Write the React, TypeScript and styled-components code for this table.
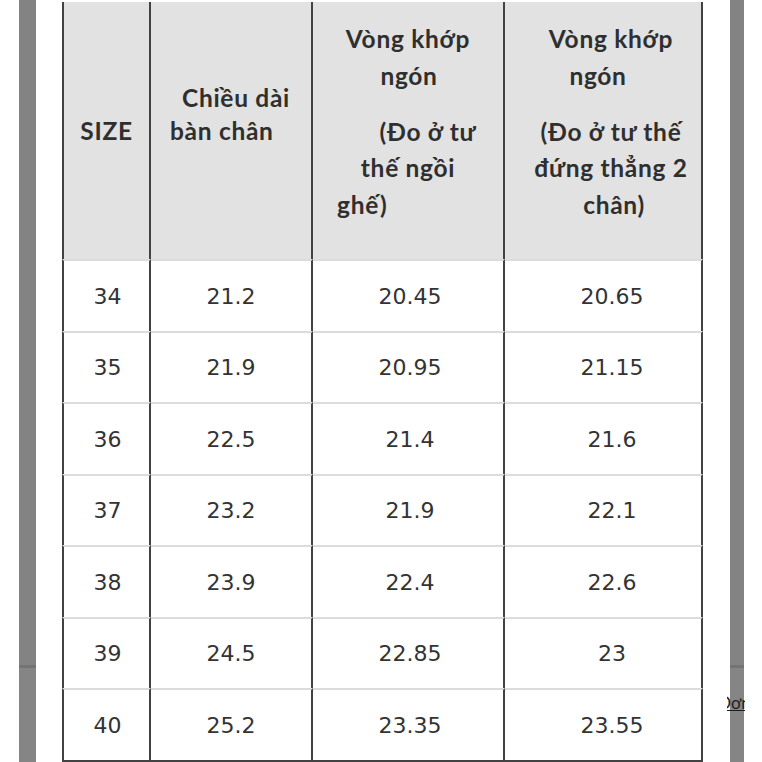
import React from "react";
import styled, { createGlobalStyle } from "styled-components";

const Global = createGlobalStyle`
  html, body { margin: 0; padding: 0; background: #ffffff; }
  body { font-family: "Lato", "Liberation Sans", sans-serif; }
`;

const Page = styled.div`
  position: relative;
  display: grid;
  grid-template-columns: 19px 17px 1fr 14px 18px;
  width: 762px;
  height: 762px;
  overflow: hidden;
  background: #ffffff;
`;

const Blank = styled.div`
  background: #ffffff;
`;

const SideBar = styled.div`
  background: linear-gradient(
    to bottom,
    #838383 0,
    #838383 665px,
    #747474 665px,
    #747474 668px,
    #858585 668px
  );
`;

const Center = styled.div`
  padding: 2px 27px 0 26px;
`;

const Grid = styled.div`
  display: grid;
  grid-template-columns: 89px 162px 192px 198px;
  grid-template-rows: 257px repeat(7, 71.5px);
  border-bottom: 2px solid #424242;
`;

const HeadCell = styled.div<{ $first?: boolean; $padBottom: number; $padLeft: number; $lh: number }>`
  box-sizing: border-box;
  display: flex;
  flex-direction: column;
  justify-content: center;
  background: #e2e2e2;
  border-right: 2px solid #424242;
  border-left: ${(p) => (p.$first ? "2px solid #424242" : "none")};
  padding: 0 2px ${(p) => p.$padBottom}px ${(p) => p.$padLeft}px;
  color: #2f2f2f;
  font-family: "Lato", "Liberation Sans", sans-serif;
  font-weight: 700;
  font-size: 24.5px;
  letter-spacing: 0.7px;
  line-height: ${(p) => p.$lh}px;
`;

const Para = styled.div<{ $gap?: number }>`
  margin-bottom: ${(p) => p.$gap ?? 0}px;
`;

const Line = styled.div<{ $align?: "left" | "center"; $shift?: number }>`
  white-space: nowrap;
  text-align: ${(p) => p.$align ?? "center"};
  padding-left: ${(p) => (p.$shift && p.$shift > 0 ? p.$shift : 0)}px;
  padding-right: ${(p) => (p.$shift && p.$shift < 0 ? -p.$shift : 0)}px;
`;

const Cell = styled.div<{ $first?: boolean; $padLeft: number }>`
  box-sizing: border-box;
  display: flex;
  align-items: center;
  justify-content: center;
  border-top: 2px solid #dcdcdc;
  border-right: 2px solid #424242;
  border-left: ${(p) => (p.$first ? "2px solid #424242" : "none")};
  padding-left: ${(p) => p.$padLeft}px;
  padding-top: 1px;
  color: #333333;
  font-family: "DejaVu Sans", "Liberation Sans", sans-serif;
  font-size: 22px;
  font-weight: 400;
`;

const Clip = styled.div`
  position: absolute;
  left: 727px;
  top: 693px;
  width: 18px;
  height: 22px;
  overflow: hidden;
`;

const Peek = styled.span`
  display: block;
  margin-left: -9px;
  white-space: nowrap;
  font-family: "Lato", "Liberation Sans", sans-serif;
  font-size: 17px;
  line-height: 20px;
  color: #1e1e1e;
  text-decoration: underline;
`;

const rows: [string, string, string, string][] = [
  ["34", "21.2", "20.45", "20.65"],
  ["35", "21.9", "20.95", "21.15"],
  ["36", "22.5", "21.4", "21.6"],
  ["37", "23.2", "21.9", "22.1"],
  ["38", "23.9", "22.4", "22.6"],
  ["39", "24.5", "22.85", "23"],
  ["40", "25.2", "23.35", "23.55"],
];

const bodyPad = [2, 0, 4, 18];

export default function App() {
  return (
    <>
      <Global />
      <Page>
        <Blank />
        <SideBar />
        <Center>
          <Grid>
            <HeadCell $first $padBottom={0} $padLeft={2} $lh={36}>
              <Line>SIZE</Line>
            </HeadCell>
            <HeadCell $padBottom={34} $padLeft={19} $lh={33}>
              <Line $align="left" $shift={12}>Chiều dài</Line>
              <Line $align="left">bàn chân</Line>
            </HeadCell>
            <HeadCell $padBottom={17} $padLeft={2} $lh={36.5}>
              <Para $gap={19.5}>
                <Line>Vòng khớp</Line>
                <Line $shift={2}>ngón</Line>
              </Para>
              <Para>
                <Line $shift={40}>(Đo ở tư</Line>
                <Line>thế ngồi</Line>
                <Line $align="left" $shift={22}>ghế)</Line>
              </Para>
            </HeadCell>
            <HeadCell $padBottom={17} $padLeft={18} $lh={36.5}>
              <Para $gap={19.5}>
                <Line>Vòng khớp</Line>
                <Line $shift={-26}>ngón</Line>
              </Para>
              <Para>
                <Line>(Đo ở tư thế</Line>
                <Line>đứng thẳng 2</Line>
                <Line $shift={6}>chân)</Line>
              </Para>
            </HeadCell>
            {rows.map((r) =>
              r.map((v, i) => (
                <Cell key={r[0] + "-" + i} $first={i === 0} $padLeft={bodyPad[i]}>
                  {v}
                </Cell>
              ))
            )}
          </Grid>
        </Center>
        <SideBar />
        <Blank />
        <Clip>
          <Peek>Đơn</Peek>
        </Clip>
      </Page>
    </>
  );
}
